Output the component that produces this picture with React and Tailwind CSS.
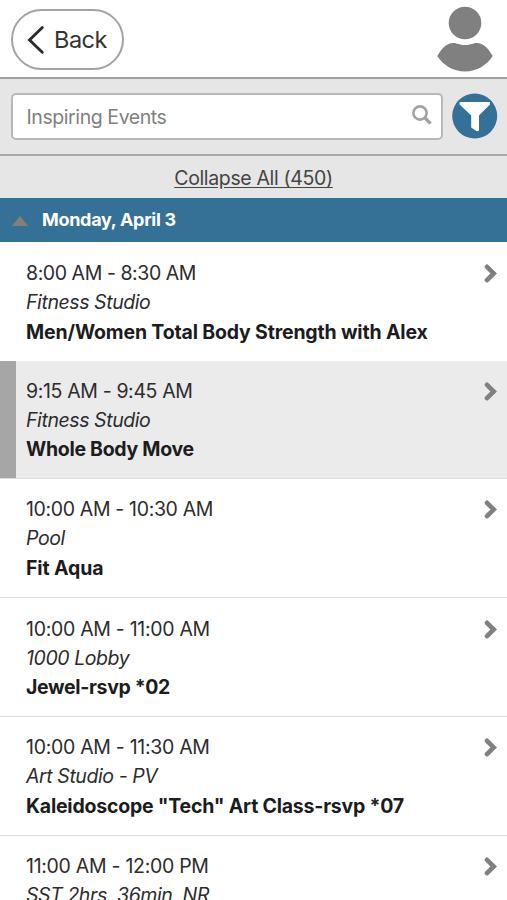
import React, { useState } from 'react';
import clsx from 'clsx';

const EVENTS = [
  {
    id: 1,
    time: '8:00 AM - 8:30 AM',
    location: 'Fitness Studio',
    title: 'Men/Women Total Body Strength with Alex',
    timeSpacing: 'tracking-[-0.43px]',
    titleSpacing: 'tracking-[-0.17px]',
    rowClass: 'h-[119px] pt-[17px]'
  },
  {
    id: 2,
    time: '9:15 AM - 9:45 AM',
    location: 'Fitness Studio',
    title: 'Whole Body Move',
    timeSpacing: 'tracking-[-0.36px]',
    titleSpacing: 'tracking-[-0.3px]',
    rowClass: 'h-[118px] border-b pt-[15.5px]'
  },
  {
    id: 3,
    time: '10:00 AM - 10:30 AM',
    location: 'Pool',
    title: 'Fit Aqua',
    timeSpacing: 'tracking-[-0.35px]',
    titleSpacing: 'tracking-[-0.12px]',
    rowClass: 'h-[119px] border-b pt-4'
  },
  {
    id: 4,
    time: '10:00 AM - 11:00 AM',
    location: '1000 Lobby',
    title: 'Jewel-rsvp *02',
    timeSpacing: 'tracking-[-0.3px]',
    titleSpacing: 'tracking-[-0.35px]',
    rowClass: 'h-[119px] border-b pt-[16.5px]'
  },
  {
    id: 5,
    time: '10:00 AM - 11:30 AM',
    location: 'Art Studio - PV',
    title: 'Kaleidoscope "Tech" Art Class-rsvp *07',
    timeSpacing: 'tracking-[-0.3px]',
    titleSpacing: 'tracking-[-0.22px]',
    rowClass: 'h-[119px] border-b pt-4'
  },
  {
    id: 6,
    time: '11:00 AM - 12:00 PM',
    location: 'SST 2hrs, 36min, NR',
    title: '',
    timeSpacing: 'tracking-[-0.29px]',
    titleSpacing: 'tracking-[-0.2px]',
    rowClass: 'h-[119px] border-b pt-4'
  }
];

const BackIcon = () => (
  <svg width="18" height="30" viewBox="0 0 18 30" fill="none" className="shrink-0">
    <path d="M15.3 2.5 L2.5 15 L15.3 27.3" stroke="#2b2b2b" strokeWidth="2.9" strokeLinecap="round" strokeLinejoin="miter" />
  </svg>
);

const UserIcon = () => (
  <svg width="56" height="66" viewBox="0 0 56 66" fill="#808080" className="shrink-0">
    <circle cx="28" cy="17" r="16.3" />
    <path d="M0.3 50 C5 42 10 37 16 37 C20 37 22 39 28 39 C34 39 36 37 40 37 C46 37 51 42 55.7 50 C50 59 40 65.5 28 65.5 C16 65.5 6 59 0.3 50 Z" />
  </svg>
);

const SearchIcon = () => (
  <svg width="20" height="20" viewBox="0 0 20 20" fill="none" stroke="#a3a3a3" className="mb-1 shrink-0">
    <circle cx="8" cy="8" r="6.6" strokeWidth="2.6" />
    <path d="M12.8 12.8 L18.6 18.6" strokeWidth="3.4" />
  </svg>
);

const FilterIcon = () => (
  <svg width="46" height="46" viewBox="0 0 46 46" className="mb-px shrink-0">
    <circle cx="22.7" cy="23" r="22.5" fill="#357197" />
    <path d="M7.6 9 H37.9 V11.6 L27 22.4 V37.7 L24.8 38.3 L19.2 34.5 V22.4 L7.6 11.6 Z" fill="#fff" />
  </svg>
);

const ChevronIcon = () => (
  <svg width="13" height="19" viewBox="0 0 13 19" fill="none" className="shrink-0">
    <path d="M3 2.8 L9.8 9.5 L3 16.2" stroke="#808080" strokeWidth="4.6" strokeLinecap="round" />
  </svg>
);

const EventRow = ({ event, selected, onSelect }) => (
  <div
    onClick={onSelect}
    className={clsx(
      'flex shrink-0 cursor-pointer items-start border-[#dcdcdc]',
      event.rowClass,
      selected ? 'bg-[linear-gradient(to_right,#a6a6a6_16px,#ebebeb_16px)]' : 'bg-white'
    )}
  >
    <div className="grow pl-[26px] text-[19.5px] leading-[29.3px] whitespace-nowrap text-[#2c2c2e]">
      <div className={event.timeSpacing}>{event.time}</div>
      <div className="tracking-[-0.42px] italic">{event.location}</div>
      <div className={clsx('font-bold text-[#1c1c1e]', event.titleSpacing)}>{event.title}</div>
    </div>
    <div className="pt-[5px] pr-[10.5px]">
      <ChevronIcon />
    </div>
  </div>
);

export default function App() {
  const [selectedId, setSelectedId] = useState(2);
  const [open, setOpen] = useState(true);

  return (
    <div className="flex h-[900px] w-[507px] flex-col overflow-hidden bg-white font-['Inter',sans-serif]">
      {/* Header */}
      <div className="flex h-[79px] shrink-0 items-start justify-between border-b-2 border-[#a0a0a0] pr-[14px] pl-[11px]">
        <button className="mt-[9px] flex h-[61px] w-[113px] items-center gap-[9px] rounded-full border-2 border-[#a3a3a3] pl-[14px] text-[23.5px] tracking-[-0.5px] text-[#333]">
          <BackIcon />
          <span>Back</span>
        </button>
        <div className="pt-1.5">
          <UserIcon />
        </div>
      </div>

      {/* Search */}
      <div className="flex h-[77px] shrink-0 items-center justify-between border-b-2 border-[#a8a8a8] bg-[#e6e6e6] pr-[9px] pl-[11px]">
        <div className="flex h-[47px] w-[432px] items-center justify-between rounded-[5px] border-2 border-[#b8b8b8] bg-white pr-[9px] pl-[13.5px]">
          <span className="pt-0.5 text-[19.5px] tracking-[-0.42px] text-[#808080]">Inspiring Events</span>
          <SearchIcon />
        </div>
        <FilterIcon />
      </div>

      <div className="flex h-[42px] shrink-0 items-center justify-center bg-[#e6e6e6] pt-1">
        <button onClick={() => setOpen(!open)} className="text-[19.5px] tracking-[-0.35px] text-[#444] underline underline-offset-2">
          Collapse All (450)
        </button>
      </div>

      {/* Day */}
      <div className="flex h-11 shrink-0 items-center gap-[14px] bg-[#357197] pb-0.5 pl-3">
        <svg width="16" height="10" viewBox="0 0 16 10" className="mt-[3px]">
          <path d="M8 0 L16 10 H0 Z" fill="#857f77" />
        </svg>
        <span className="text-[18px] font-bold tracking-[-0.3px] text-white">Monday, April 3</span>
      </div>

      {open && EVENTS.map((event) => (
        <EventRow
          key={event.id}
          event={event}
          selected={event.id === selectedId}
          onSelect={() => setSelectedId(event.id)}
        />
      ))}
    </div>
  );
}
